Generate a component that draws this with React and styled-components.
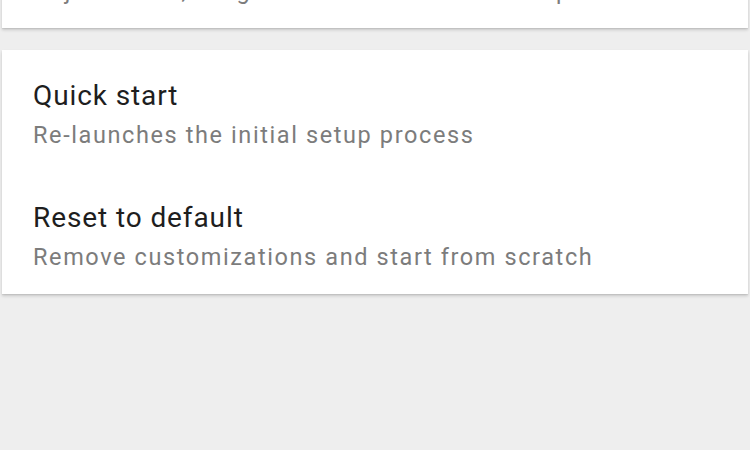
import React from "react";
import styled, { createGlobalStyle } from "styled-components";

const Global = createGlobalStyle`
  html, body { margin: 0; padding: 0; background: #eeeeee; overflow: hidden; }
  body { font-family: Roboto, "Noto Sans", "Liberation Sans", sans-serif; }
`;

const Page = styled.div`
  width: 750px;
  height: 450px;
  overflow: hidden;
  background: #eeeeee;
`;

const List = styled.div`
  display: flex;
  flex-direction: column;
  gap: 22px;
  margin-top: -94px;
  padding: 0 2px;
`;

const Card = styled.section`
  background: #ffffff;
  box-shadow: 0 2px 3px rgba(0, 0, 0, 0.16), 0 1px 1px rgba(0, 0, 0, 0.06);
  display: flex;
  flex-direction: column;
`;

const Item = styled.div`
  padding: 30px 31px 22px;
  height: 122px;
  box-sizing: border-box;
`;

const Title = styled.div`
  font-size: 28px;
  line-height: 32px;
  letter-spacing: 0.9px;
  color: #1e1e1e;
  white-space: nowrap;
`;

const Subtitle = styled.div`
  margin-top: 9px;
  font-size: 23.5px;
  line-height: 28px;
  letter-spacing: 1.6px;
  color: #7c7c7c;
  white-space: nowrap;
`;

const sections = [
  [
    {
      title: "Home screen",
      sub: "Adjust icons, widgets and folders on desktop",
    },
  ],
  [
    { title: "Quick start", sub: "Re-launches the initial setup process" },
    { title: "Reset to default", sub: "Remove customizations and start from scratch" },
  ],
];

export default function App() {
  return (
    <Page>
      <Global />
      <List>
        {sections.map((items, i) => (
          <Card key={i}>
            {items.map((it) => (
              <Item key={it.title}>
                <Title>{it.title}</Title>
                <Subtitle>{it.sub}</Subtitle>
              </Item>
            ))}
          </Card>
        ))}
      </List>
    </Page>
  );
}
